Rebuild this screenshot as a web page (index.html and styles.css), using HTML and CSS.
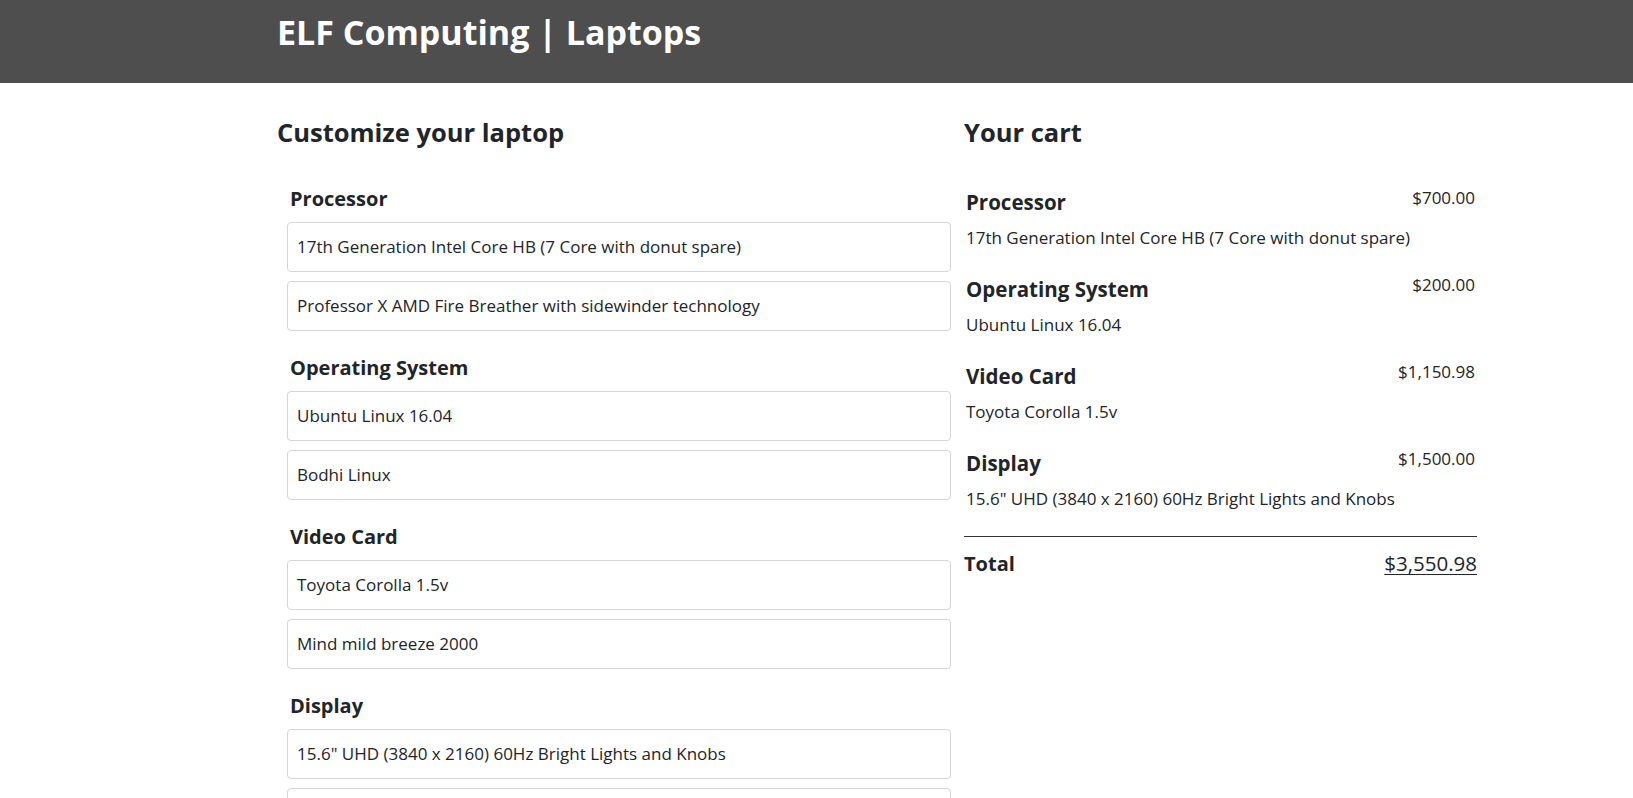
FILE: index.html
```html
<!DOCTYPE html>
<html lang="en">
<head>
<meta charset="utf-8">
<title>ELF Computing | Laptops</title>
<link rel="stylesheet" href="styles.css">
</head>
<body>
<header class="site-header">
  <h1 class="site-title">ELF Computing | Laptops</h1>
</header>
<main class="main">
  <form class="customize">
    <h2 class="section-title">Customize your laptop</h2>

    <fieldset class="feature">
      <legend class="feature-name">Processor</legend>
      <div class="feature-item"><label class="feature-option">17th Generation Intel Core HB (7 Core with donut spare)</label></div>
      <div class="feature-item"><label class="feature-option">Professor X AMD Fire Breather with sidewinder technology</label></div>
    </fieldset>

    <fieldset class="feature">
      <legend class="feature-name">Operating System</legend>
      <div class="feature-item"><label class="feature-option">Ubuntu Linux 16.04</label></div>
      <div class="feature-item"><label class="feature-option">Bodhi Linux</label></div>
    </fieldset>

    <fieldset class="feature">
      <legend class="feature-name">Video Card</legend>
      <div class="feature-item"><label class="feature-option">Toyota Corolla 1.5v</label></div>
      <div class="feature-item"><label class="feature-option">Mind mild breeze 2000</label></div>
    </fieldset>

    <fieldset class="feature">
      <legend class="feature-name">Display</legend>
      <div class="feature-item"><label class="feature-option">15.6" UHD (3840 x 2160) 60Hz Bright Lights and Knobs</label></div>
      <div class="feature-item"><label class="feature-option">15.3" HGTV (3840 x 2160) Home makeover edition</label></div>
    </fieldset>
  </form>

  <section class="cart">
    <h2 class="section-title">Your cart</h2>

    <div class="cart-item">
      <div class="cart-item-name">Processor</div>
      <div class="cart-item-cost">$700.00</div>
      <div class="cart-item-value">17th Generation Intel Core HB (7 Core with donut spare)</div>
    </div>

    <div class="cart-item">
      <div class="cart-item-name">Operating System</div>
      <div class="cart-item-cost">$200.00</div>
      <div class="cart-item-value">Ubuntu Linux 16.04</div>
    </div>

    <div class="cart-item">
      <div class="cart-item-name">Video Card</div>
      <div class="cart-item-cost">$1,150.98</div>
      <div class="cart-item-value">Toyota Corolla 1.5v</div>
    </div>

    <div class="cart-item">
      <div class="cart-item-name">Display</div>
      <div class="cart-item-cost">$1,500.00</div>
      <div class="cart-item-value">15.6" UHD (3840 x 2160) 60Hz Bright Lights and Knobs</div>
    </div>

    <div class="cart-total">
      <div class="cart-total-label">Total</div>
      <div class="cart-total-value">$3,550.98</div>
    </div>
  </section>
</main>
</body>
</html>
```

FILE: styles.css
```css
html, body {
  margin: 0;
  padding: 0;
}

body {
  font-family: "Open Sans", "Noto Sans", "Liberation Sans", sans-serif;
  color: #212529;
  background: #ffffff;
  font-size: 17px;
}

.site-header {
  background-color: #4e4e4e;
  color: #ffffff;
  height: 83px;
  box-sizing: border-box;
  padding: 10px 0 0 277px;
}

.site-title {
  margin: 0;
  font-size: 34px;
  font-weight: 700;
  line-height: 44px;
}

.main {
  display: flex;
  align-items: flex-start;
  padding-left: 277px;
  gap: 13px;
}

.customize {
  width: 674px;
  flex: none;
}

.cart {
  width: 513px;
  flex: none;
}

.section-title {
  margin: 33px 0 0;
  font-size: 25.5px;
  font-weight: 700;
  line-height: 32px;
}

.feature {
  border: 0;
  margin: 0 0 25px;
  padding: 0 0 0 10px;
  display: flex;
  flex-direction: column;
  gap: 9px;
}

.customize .section-title + .feature {
  margin-top: 39px;
}

.feature-name {
  float: left;
  width: 100%;
  padding: 0 0 0 3px;
  margin-bottom: 2px;
  font-size: 20px;
  font-weight: 700;
  line-height: 24px;
}

.feature-item {
  height: 50px;
  box-sizing: border-box;
  border: 1px solid #d6d6d6;
  border-radius: 4px;
  display: flex;
  align-items: center;
  padding: 0 9px;
}

.feature-option {
  font-size: 17px;
  line-height: 20px;
}

.cart .section-title {
  margin-bottom: 40px;
}

.cart-item {
  display: grid;
  grid-template-columns: 1fr auto;
  column-gap: 12px;
  row-gap: 12px;
  padding: 0 2px;
  margin-bottom: 27px;
}

.cart-item-name {
  font-size: 20.5px;
  font-weight: 700;
  line-height: 28px;
}

.cart-item-cost {
  font-size: 17px;
  line-height: 20px;
  text-align: right;
}

.cart-item-value {
  grid-column: 1 / -1;
  font-size: 17px;
  line-height: 20px;
}

.cart-total {
  border-top: 1px solid #333333;
  margin-top: 0;
  padding-top: 12px;
  display: flex;
  justify-content: space-between;
  align-items: baseline;
}

.cart-total-label {
  font-size: 20px;
  font-weight: 700;
  line-height: 28px;
}

.cart-total-value {
  font-size: 20.5px;
  line-height: 28px;
  text-decoration: underline;
  text-decoration-thickness: 1px;
  text-underline-offset: 3px;
}
```
